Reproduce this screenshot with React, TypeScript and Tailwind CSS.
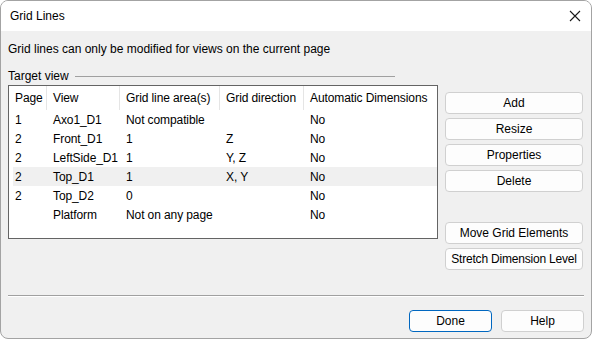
import React from 'react';

const rows = [
  { page: '1', view: 'Axo1_D1', area: 'Not compatible', dir: '', auto: 'No' },
  { page: '2', view: 'Front_D1', area: '1', dir: 'Z', auto: 'No' },
  { page: '2', view: 'LeftSide_D1', area: '1', dir: 'Y, Z', auto: 'No' },
  { page: '2', view: 'Top_D1', area: '1', dir: 'X, Y', auto: 'No', selected: true },
  { page: '2', view: 'Top_D2', area: '0', dir: '', auto: 'No' },
  { page: '', view: 'Platform', area: 'Not on any page', dir: '', auto: 'No' },
];

const Button = ({ label, primary = false }: { label: string; primary?: boolean }) => (
  <button
    className={`block h-[22px] w-full rounded-[4px] border bg-[#fdfdfd] text-[12px] text-black whitespace-nowrap ${
      primary ? 'border-[#0067c0]' : 'border-[#d0d0d0]'
    }`}
  >
    {label}
  </button>
);

const App = () => {
  return (
    <div
      className="w-[592px] h-[339px] overflow-hidden rounded-[8px] border border-[#a3a3a3] bg-[#f0f0f0] flex flex-col text-black"
      style={{ fontFamily: '"Liberation Sans", Arial, sans-serif' }}
    >
      {/* Title bar */}
      <div className="h-[30px] bg-white flex items-center justify-between pl-[9px] pr-[10px] shrink-0">
        <span className="text-[12px]">Grid Lines</span>
        <svg width="12" height="12" viewBox="0 0 12 12">
          <path d="M1 1 L11 11 M11 1 L1 11" stroke="#1a1a1a" strokeWidth="1.1" />
        </svg>
      </div>

      <div className="flex flex-col px-[7px] flex-1">
        <div className="mt-[10px] h-[16px] text-[12px] leading-[16px]">
          Grid lines can only be modified for views on the current page
        </div>

        {/* Target view legend */}
        <div className="mt-[11px] h-[16px] flex items-center">
          <span className="text-[12px] leading-[16px]">Target view</span>
          <div className="ml-[6px] h-px w-[320px] bg-[#a0a0a0]" />
        </div>

        <div className="flex items-start mt-[1px]">
          {/* Table */}
          <div className="w-[430px] h-[154px] border border-[#646464] bg-white text-[12px] tracking-[-0.1px]">
            <div className="flex h-[24px]">
              <div className="w-[38px] pl-[6px] flex items-center border-r border-[#e5e5e5]">Page</div>
              <div className="w-[73px] pl-[6px] flex items-center border-r border-[#e5e5e5]">View</div>
              <div className="w-[100px] pl-[6px] flex items-center border-r border-[#e5e5e5]">Grid line area(s)</div>
              <div className="w-[84px] pl-[6px] flex items-center border-r border-[#e5e5e5]">Grid direction</div>
              <div className="flex-1 pl-[6px] flex items-center">Automatic Dimensions</div>
            </div>
            {rows.map((r, i) => (
              <div
                key={i}
                className={`flex h-[19px] ml-[4px] items-center ${r.selected ? 'bg-[#f0f0f0]' : ''}`}
              >
                <div className="w-[34px] pl-[2px]">{r.page}</div>
                <div className="w-[73px] pl-[6px] whitespace-nowrap">{r.view}</div>
                <div className="w-[100px] pl-[6px]">{r.area}</div>
                <div className="w-[84px] pl-[6px]">{r.dir}</div>
                <div className="flex-1 pl-[6px]">{r.auto}</div>
              </div>
            ))}
          </div>

          {/* Side buttons */}
          <div className="ml-[7px] w-[138px] flex flex-col mt-[7px]">
            <div className="flex flex-col gap-[4px]">
              <Button label="Add" />
              <Button label="Resize" />
              <Button label="Properties" />
              <Button label="Delete" />
            </div>
            <div className="flex flex-col gap-[4px] mt-[30px]">
              <Button label="Move Grid Elements" />
              <div className="tracking-[-0.2px]">
                <Button label="Stretch Dimension Level" />
              </div>
            </div>
          </div>
        </div>

        {/* Separator */}
        <div className="mt-[25px] h-px bg-[#a0a0a0]" />
        <div className="h-px bg-white" />

        <div className="flex justify-end gap-[9px] mt-[13px]">
          <div className="w-[83px]">
            <Button label="Done" primary />
          </div>
          <div className="w-[83px]">
            <Button label="Help" />
          </div>
        </div>
      </div>
    </div>
  );
};

export default App;
